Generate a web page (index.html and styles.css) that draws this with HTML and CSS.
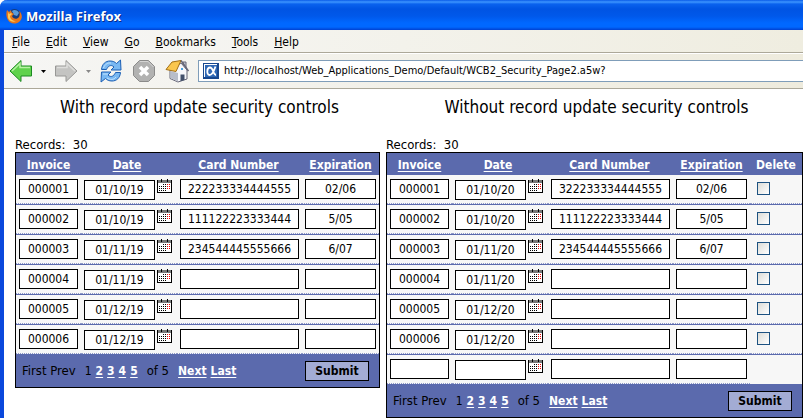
FILE: index.html
```html
<!DOCTYPE html>
<html lang="en">
<head>
<meta charset="utf-8">
<title>Mozilla Firefox</title>
<link rel="stylesheet" href="styles.css">
</head>
<body>
<svg class="defs" aria-hidden="true">
  <symbol id="cal" viewBox="0 0 15 14">
    <g shape-rendering="crispEdges">
    <path fill="#fff" d="M0 2h15v12H0z"/>
    <path fill="#777" d="M0 1h15v3H0z"/>
    <path fill="#000" d="M0 1h1v13H0zM14 1h1v13h-1zM0 13h15v1H0zM4 0h1v3H4zM10 0h1v3h-1z"/>
    <path fill="#000" d="M6 5h1v1H6zM8 5h1v1H8zM4 7h1v1H4zM6 7h1v1H6zM8 7h1v1H8zM2 7h1v1H2zM2 9h1v1H2zM4 9h1v1H4zM6 9h1v1H6zM8 9h1v1H8zM2 11h1v1H2zM4 11h1v1H4zM6 11h1v1H6zM8 11h1v1H8z"/>
    <path fill="#e00" d="M10 5h1v1h-1zM12 5h1v1h-1zM10 7h1v1h-1zM12 7h1v1h-1zM10 9h1v1h-1zM12 9h1v1h-1z"/>
    </g>
  </symbol>
</svg>
<div class="window">
  <header class="titlebar">
    <svg class="logo" viewBox="0 0 16 16" aria-hidden="true">
      <circle cx="8.500" cy="7.500" r="6.500" fill="#153b7c"/>
      <path fill="#5a9bd8" d="M6 3c2-2 6-1 7 2l-2 3-3-1z"/>
      <path fill="#e8761a" d="M1 2l2 2 2-2c0 2 1 3 3 4L6 8c1 3 5 4 7 1 1-2 1-4 0-6 3 2 4 7 1 10-4 4-10 3-12-1C0 9 0 5 1 2z"/>
      <path fill="#fbc95c" d="M2 4l1 2 2-1 1 1-2 2c0 3 3 5 6 5-4 2-8-1-8-4z"/>
    </svg>
    <span>Mozilla Firefox</span>
  </header>
  <nav class="menubar">
    <button type="button"><u>F</u>ile</button>
    <button type="button"><u>E</u>dit</button>
    <button type="button"><u>V</u>iew</button>
    <button type="button"><u>G</u>o</button>
    <button type="button"><u>B</u>ookmarks</button>
    <button type="button"><u>T</u>ools</button>
    <button type="button"><u>H</u>elp</button>
  </nav>
  <div class="toolbar">
    <button type="button" class="tool split" aria-label="Back">
      <svg width="24" height="24" viewBox="0 0 24 24"><path d="M1 12L12 1.500V7h10.500v10H12v5.500z" fill="#5fd24c" stroke="#1c8a22"/><path d="M3 12l8-7.500V8.500h10" fill="none" stroke="#b6f2a4" stroke-width="1.500"/></svg>
      <svg width="5" height="3" viewBox="0 0 5 3"><path d="M0 0h5L2.500 3z"/></svg>
    </button>
    <button type="button" class="tool split" aria-label="Forward">
      <svg width="24" height="24" viewBox="0 0 24 24"><path d="M23 12L12 1.500V7H1.500v10H12v5.500z" fill="#c4c4c2" stroke="#989896"/><path d="M3 8.500h10V4.500l8 7.500" fill="none" stroke="#dededc" stroke-width="1.500"/></svg>
      <svg width="5" height="3" viewBox="0 0 5 3"><path d="M0 0h5L2.500 3z" fill="#888"/></svg>
    </button>
    <button type="button" class="tool" aria-label="Reload">
      <svg width="24" height="24" viewBox="0 0 24 24" fill="#79b8f2" stroke="#1c5fb4" stroke-linejoin="round"><path d="M2.500 10.500C3 5 6.500 2 11 2c3 0 5 1 6.500 2.500L21.500 1 22 11H12l3-3c-3-3-6-1-7.500 2.500z"/><path d="M21.500 13.500C21 19 17.500 22 13 22c-3 0-5-1-6.500-2.500L2 23l.5-10H12l-3 3c3 3 6 1 7.500-2.500z"/><path d="M4.500 9C6 5 9 3.500 12 4M4 15h5M8 19c3 2 7 2 9-1" fill="none" stroke="#c4e4ff"/></svg>
    </button>
    <button type="button" class="tool" aria-label="Stop">
      <svg width="24" height="24" viewBox="0 0 24 24"><path d="M7.500 1.500h9l6 6v9l-6 6h-9l-6-6v-9z" fill="#b2b2b1" stroke="#8b8b8a"/><path d="M8 2.500h8l5.500 5.500" fill="none" stroke="#d5d5d4"/><path d="M8 8l8 8M16 8l-8 8" stroke="#fff" stroke-width="3.500"/></svg>
    </button>
    <button type="button" class="tool" aria-label="Home">
      <svg width="24" height="24" viewBox="0 0 24 24" stroke-linejoin="round"><path d="M18 3h3v6h-3z" fill="#c9ccd4" stroke="#667"/><path d="M5 11v8.500l8 3.500 9-3v-9l-6-7z" fill="#f7f7fa" stroke="#667"/><path d="M5.500 12l7.500 2v8.500l-7.500-3.500z" fill="#b8bdc9"/><path d="M15.500 15.500h4V21l-4 1.300z" fill="#42506a"/><path d="M16 9h2v2h-2z" fill="#4ea5e0"/><path d="M7 3L16 1.500 11 12.500 1 10.500z" fill="#fac64e" stroke="#a36f14"/><path d="M16 1.500L23.500 12" stroke="#667" stroke-width="1.500" fill="none"/></svg>
    </button>
    <label class="address">
      <svg width="16" height="16" viewBox="0 0 16 16" aria-hidden="true"><path fill="#16478f" d="M0 0h16v16H0z"/><path fill="#fff" d="M1 1h13v13H1z"/><path fill="#2e67b5" d="M2 2h12v12H2z"/><path d="M12.500 3.500C11 8 9.500 12 6.500 12S3.500 4.500 7 4.500s3 7.500 6 7.500" fill="none" stroke="#fff" stroke-width="1.800"/></svg>
      <input type="text" aria-label="Address" value="http://localhost/Web_Applications_Demo/Default/WCB2_Security_Page2.a5w?">
    </label>
  </div>
  <main class="page">
    <section class="panel secured">
      <h1>With record update security controls</h1>
      <p class="records">Records:&nbsp; 30</p>
      <table class="grid">
        <thead><tr><th class="c-inv"><a href="#">Invoice</a></th><th class="c-date"><a href="#">Date</a></th><th class="c-card"><a href="#">Card Number</a></th><th class="c-exp"><a href="#">Expiration</a></th></tr></thead>
        <tbody data-year="19" data-cards="222233334444555,111122223333444,234544445555666" data-rows="6"></tbody>
        <tfoot><tr><td colspan="4"><div class="footer">
          <span class="edge">First Prev</span><span class="nums">1 <a href="#">2</a> <a href="#">3</a> <a href="#">4</a> <a href="#">5</a></span><span class="of">of 5</span><span class="nums"><a href="#">Next</a> <a href="#">Last</a></span>
          <button type="button" class="submit">Submit</button>
        </div></td></tr></tfoot>
      </table>
    </section>
    <section class="panel open">
      <h1>Without record update security controls</h1>
      <p class="records">Records:&nbsp; 30</p>
      <table class="grid">
        <thead><tr><th class="c-inv"><a href="#">Invoice</a></th><th class="c-date"><a href="#">Date</a></th><th class="c-card"><a href="#">Card Number</a></th><th class="c-exp"><a href="#">Expiration</a></th><th class="c-del">Delete</th></tr></thead>
        <tbody data-year="20" data-cards="322233334444555,111122223333444,234544445555666" data-rows="7" data-delete="1"></tbody>
        <tfoot><tr><td colspan="5"><div class="footer">
          <span class="edge">First Prev</span><span class="nums">1 <a href="#">2</a> <a href="#">3</a> <a href="#">4</a> <a href="#">5</a></span><span class="of">of 5</span><span class="nums"><a href="#">Next</a> <a href="#">Last</a></span>
          <button type="button" class="submit">Submit</button>
        </div></td></tr></tfoot>
      </table>
    </section>
  </main>
</div>
<script src="grid.js"></script>
</body>
</html>
```
FILE: grid.js
```js
const days = ['01/10', '01/10', '01/11', '01/11', '01/12', '01/12'];
const expirations = ['02/06', '5/05', '6/07'];
const field = (label, value) => `<input type="text" aria-label="${label}" value="${value || ''}">`;

document.querySelectorAll('tbody').forEach(body => {
  const { year, cards, rows } = body.dataset;
  const numbers = cards.split(',');
  let html = '';
  for (let i = 0; i < Number(rows); i++) {
    const saved = i < days.length;
    html += `<tr>
      <td class="c-inv">${field('Invoice', saved ? '00000' + (i + 1) : '')}</td>
      <td class="c-date"><div class="date">${field('Date', saved ? days[i] + '/' + year : '')}<button type="button" class="pick" aria-label="Pick date"><svg width="15" height="14"><use href="#cal"/></svg></button></div></td>
      <td class="c-card">${field('Card Number', numbers[i])}</td>
      <td class="c-exp">${field('Expiration', expirations[i])}</td>`;
    if (body.dataset.delete) {
      html += saved
        ? '<td class="c-del"><input type="checkbox" aria-label="Delete"></td>'
        : '<td class="c-del blank"></td>';
    }
    html += '</tr>';
  }
  body.innerHTML = html;
});
```
FILE: styles.css
```css
* { box-sizing: border-box; }
html { height: 100%; }
body {
  margin: 0;
  min-height: 100%;
  background: #fff;
  color: #000;
  font: 12px/16px "DejaVu Sans Condensed", "DejaVu Sans", sans-serif;
  overflow: hidden;
}
.defs { display: none; }
button, input { font: inherit; color: inherit; margin: 0; padding: 0; border-radius: 0; }
button { border: 0; background: none; }
svg { display: block; flex: none; }

.window {
  min-height: 100vh;
  border-left: 4px solid #0a48dc;
  border-top-left-radius: 7px;
  background: #fff;
}
.titlebar {
  display: flex;
  align-items: center;
  gap: 4px;
  height: 30px;
  margin-left: -4px;
  padding: 2px 6px 0;
  border-top-left-radius: 7px;
  background: linear-gradient(#0a5be8 0, #3d95ff 2px, #0a62ee 4px, #0054e3 9px, #0058ea 16px, #0068ff 23px, #0068ff 27px, #0040d0 30px);
  color: #fff;
  font: bold 13px/18px "Open Sans", sans-serif;
  text-shadow: 1px 1px 0 #0a2a88;
}
.logo { width: 16px; height: 16px; }
.menubar {
  display: flex;
  gap: 16px;
  height: 23px;
  padding: 1px 8px 0;
  border-bottom: 1px solid #aca899;
  background: linear-gradient(90deg, #f7f7f6, #efede0);
}
.toolbar {
  display: flex;
  align-items: center;
  height: 36px;
  padding-left: 5px;
  border-top: 1px solid #fff;
  border-bottom: 1px solid #aca899;
  background: linear-gradient(90deg, #f6f6f4, #eeebdd);
}
.tool { display: flex; align-items: center; margin-right: 9px; }
.split { gap: 8px; margin-right: 8px; }
.address {
  display: flex;
  align-items: center;
  gap: 5px;
  flex: 1;
  height: 22px;
  padding-left: 4px;
  border: 1px solid #7f9db9;
  border-right: 0;
  background: #fff;
}
.address input { flex: 1; border: 0; outline: 0; background: none; font-size: 11px; line-height: 16px; }

.page { display: flex; gap: 6px; padding-left: 11px; }
.panel.open { flex: 1; }
h1 {
  margin: 6px 0 18px;
  padding-left: 4px;
  font-size: 17px;
  line-height: 24px;
  font-weight: normal;
  text-align: center;
}
.records { margin: 0; font-size: 13px; line-height: 15px; }

.grid { border: 1px solid #000; border-spacing: 0; background: #f7f7f7; }
.open .grid { width: 100%; }
.grid th, .grid td { padding: 0; }
.grid th { height: 22px; padding-top: 2px; background: #5b6aad; color: #fff; text-align: center; }
a { color: #fff; font-weight: bold; text-decoration: underline 1px; text-underline-offset: 2px; }
tbody td { height: 29px; border-bottom: 1px dotted #8f99c8; vertical-align: top; }
tbody .c-inv, tbody .c-card, tbody .c-exp { padding: 4px 3px; }
tbody tr + tr td { height: 30px; border-top: 1px solid #5b6aad; }
td.blank { border-bottom-color: transparent; }
.grid input[type="text"] {
  display: block;
  width: 100%;
  height: 20px;
  border: 1px solid #000;
  background: #fff;
  text-align: center;
}
.c-inv { width: 65px; }
.c-date { width: 96px; }
.c-card { width: 125px; }
.c-exp { width: 77px; }
.grid th.c-date { padding-right: 4px; }
.grid th.c-card { padding-right: 2px; }
.date { display: flex; align-items: flex-start; gap: 2px; padding: 4px 5px 0 3px; }
.date input[type="text"] { width: 71px; margin-top: 1px; }
.c-del { min-width: 52px; }
tbody .c-del { padding: 7px 7px 0; }
input[type="checkbox"] {
  display: block;
  appearance: none;
  width: 13px;
  height: 13px;
  border: 1px solid #1d5281;
  background: linear-gradient(135deg, #dcdcd7, #fff);
}
.footer {
  display: flex;
  align-items: center;
  height: 33px;
  padding: 1px 10px 0 6px;
  background: #5b6aad;
  font-size: 13px;
}
.nums { display: flex; gap: 4px; font-size: 12px; }
.edge { margin-right: 9px; }
.of { margin: 0 9px; }
.submit {
  width: 64px;
  height: 20px;
  margin-left: auto;
  border: 1px solid #000;
  background: #a3acd4;
  font-size: 12px;
  font-weight: bold;
}
```
